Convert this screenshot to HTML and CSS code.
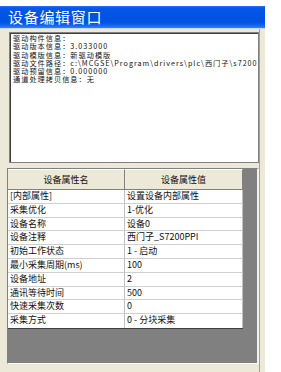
FILE: index.html
```html
<!DOCTYPE html>
<html>
<head>
<meta charset="utf-8">
<link rel="stylesheet" href="styles.css">
</head>
<body>
<div class="window">
  <div class="titlebar">设备编辑窗口</div>
  <div class="client">
    <div class="main">
      <div class="infobox">
        <div class="line">驱动构件信息：</div>
        <div class="line">驱动版本信息：3.033000</div>
        <div class="line">驱动模版信息：新驱动模版</div>
        <div class="line">驱动文件路径：c:\MCGSE\Program\drivers\plc\西门子\s7200</div>
        <div class="line">驱动预留信息：0.000000</div>
        <div class="line">通道处理拷贝信息：无</div>
      </div>
      <div class="panel">
        <div class="grid">
          <div class="hcell">设备属性名</div>
          <div class="hcell">设备属性值</div>
          <div class="cell">[内部属性]</div><div class="cell">设置设备内部属性</div>
          <div class="cell">采集优化</div><div class="cell">1-优化</div>
          <div class="cell">设备名称</div><div class="cell">设备0</div>
          <div class="cell">设备注释</div><div class="cell">西门子_S7200PPI</div>
          <div class="cell">初始工作状态</div><div class="cell">1 - 启动</div>
          <div class="cell">最小采集周期(ms)</div><div class="cell">100</div>
          <div class="cell">设备地址</div><div class="cell">2</div>
          <div class="cell">通讯等待时间</div><div class="cell">500</div>
          <div class="cell">快速采集次数</div><div class="cell">0</div>
          <div class="cell last">采集方式</div><div class="cell last">0 - 分块采集</div>
        </div>
      </div>
    </div>
    <div class="rightstrip"></div>
  </div>
</div>
</body>
</html>
```

FILE: styles.css
```css
html, body {
  margin: 0;
  padding: 0;
  background: #ffffff;
}
body {
  font-family: "Noto Sans CJK SC", "Noto Sans", sans-serif;
  color: #111;
}
.window {
  width: 265px;
  height: 372px;
  background: #ece9d8;
  display: flex;
  flex-direction: column;
  box-shadow: inset 0 6px 0 #ffffff;
}
.titlebar {
  margin-top: 6px;
  height: 22px;
  line-height: 22px;
  padding-left: 8px;
  color: #ffffff;
  font-size: 15px;
  letter-spacing: 0.7px;
  background: linear-gradient(#2a74f2 0, #0457e8 2px, #0053e2 50%, #0054e3 75%, #1868f2 90%, #3a80f8 100%);
  border-bottom: 1px solid #c8d8f0;
}
.client {
  flex: 1;
  display: flex;
}
.main {
  width: 259px;
  display: flex;
  flex-direction: column;
}
.infobox {
  margin: 3px 0 0 9px;
  background: #ffffff;
  border: 1px solid #808080;
  box-shadow: inset 1px 1px 0 #404040;
  padding: 1px 0 0 3px;
  box-sizing: border-box;
  height: 131px;
  overflow: hidden;
  font-size: 7.2px;
  line-height: 8.3px;
  letter-spacing: 1px;
}
.line {
  white-space: nowrap;
}
.panel {
  margin: 5px 0 0 7px;
  background: #808080;
  border-top: 1px solid #808080;
  border-left: 1px solid #808080;
  border-right: 2px solid #f4f3ec;
  border-bottom: 1px solid #ffffff;
  box-sizing: border-box;
  height: 196px;
}
.grid {
  width: 235px;
  display: grid;
  grid-template-columns: 117px 118px;
  grid-template-rows: 21px repeat(10, 13.8px);
  background: #ffffff;
  border-bottom: 1px solid #404040;
  font-size: 9px;
}
.hcell {
  background: #ece9d8;
  border-top: 1px solid #ffffff;
  border-bottom: 1px solid #808080;
  border-right: 1px solid #808080;
  box-sizing: border-box;
  text-align: center;
  line-height: 19px;
}
.cell {
  border-bottom: 1px solid #d0d0d0;
  border-right: 1px solid #c0c0c0;
  box-sizing: border-box;
  padding-left: 2px;
  line-height: 12.8px;
  white-space: nowrap;
  overflow: hidden;
}
.cell.last {
  border-bottom: none;
}
.rightstrip {
  width: 5px;
  border-left: 1px solid #a0a0a0;
}
```
